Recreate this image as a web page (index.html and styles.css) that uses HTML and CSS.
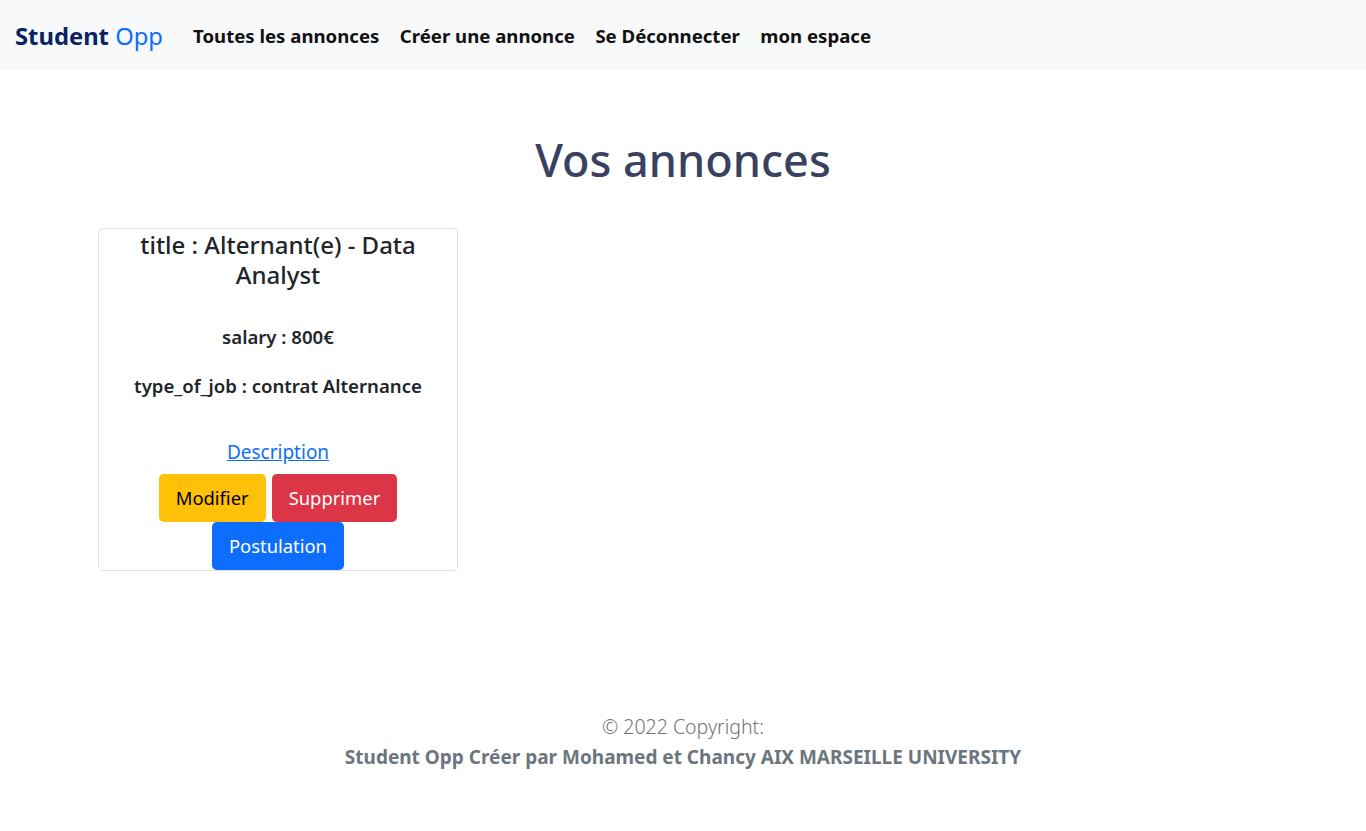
FILE: index.html
```html
<!DOCTYPE html>
<html lang="fr">
<head>
<meta charset="utf-8">
<title>Student Opp</title>
<link rel="stylesheet" href="styles.css">
</head>
<body>
<nav class="navbar">
  <a class="brand" href="#"><span class="brand-strong">Student</span> <span class="brand-light">Opp</span></a>
  <ul class="nav-links">
    <li><a href="#">Toutes les annonces</a></li>
    <li><a href="#">Créer une annonce</a></li>
    <li><a href="#">Se Déconnecter</a></li>
    <li><a href="#">mon espace</a></li>
  </ul>
</nav>
<main class="main">
  <h1 class="page-title">Vos annonces</h1>
  <div class="cards">
    <div class="card">
      <h4 class="card-title">title : Alternant(e) - Data Analyst</h4>
      <p class="card-field">salary : 800€</p>
      <p class="card-field field-type">type_of_job : contrat Alternance</p>
      <a class="card-link" href="#">Description</a>
      <div class="actions">
        <a class="btn btn-warning" href="#">Modifier</a>
        <a class="btn btn-danger" href="#">Supprimer</a>
        <a class="btn btn-primary" href="#">Postulation</a>
      </div>
    </div>
  </div>
</main>
<footer class="footer">
  <div class="copy">© 2022 Copyright:</div>
  <div class="credits">Student Opp Créer par Mohamed et Chancy AIX MARSEILLE UNIVERSITY</div>
</footer>
</body>
</html>
```
FILE: styles.css
```css
* { box-sizing: border-box; }
body {
  margin: 0;
  font-family: "Noto Sans", "Open Sans", sans-serif;
  color: #212529;
  background: #fff;
}
a { text-decoration: none; }
.navbar {
  height: 70px;
  background: #f8f9fa;
  display: flex;
  align-items: center;
  padding: 1px 0 0 15px;
}
.brand {
  font-size: 23.8px;
  margin-right: 30px;
  white-space: nowrap;
}
.brand-strong { font-weight: 700; color: #0b2365; }
.brand-light { font-weight: 400; color: #0d6efd; }
.nav-links {
  list-style: none;
  margin: 0;
  padding: 0;
  display: flex;
  gap: 20.5px;
}
.nav-links a {
  font-size: 18.6px;
  font-weight: 700;
  color: #111;
}
.main { padding-top: 61px; }
.page-title {
  margin: 0;
  text-align: center;
  font-size: 45px;
  line-height: 57px;
  font-weight: 500;
  color: #3a4160;
}
.cards {
  margin-top: 40px;
  padding-left: 98px;
}
.card {
  width: 360px;
  border: 1px solid #dee2e6;
  border-radius: 5px;
  text-align: center;
  padding: 1px 10px 0;
}
.card-title {
  margin: 0;
  font-size: 24px;
  line-height: 30px;
  font-weight: 500;
}
.card-field {
  margin: 33px 0 0;
  font-size: 18.6px;
  line-height: 27px;
  font-weight: 600;
}
.field-type { margin-top: 22px; }
.card-link {
  display: inline-block;
  margin-top: 38px;
  font-size: 19px;
  line-height: 30px;
  color: #0d6efd;
  text-decoration: underline;
}
.actions {
  margin-top: 7px;
  display: flex;
  flex-wrap: wrap;
  justify-content: center;
  column-gap: 6px;
  padding: 0 40px;
}
.btn {
  display: inline-block;
  font-size: 18.4px;
  line-height: 30px;
  padding: 8px 16px;
  border: 1px solid transparent;
  border-radius: 4.8px;
}
.btn-warning { background: #ffc107; color: #000; }
.btn-danger { background: #dc3545; color: #fff; }
.btn-primary { background: #0d6efd; color: #fff; }
.footer {
  margin-top: 141px;
  text-align: center;
  color: #6c757d;
  font-size: 19px;
  line-height: 30px;
}
.copy { font-weight: 300; font-size: 19.5px; }
.credits { font-weight: 700; }
```
